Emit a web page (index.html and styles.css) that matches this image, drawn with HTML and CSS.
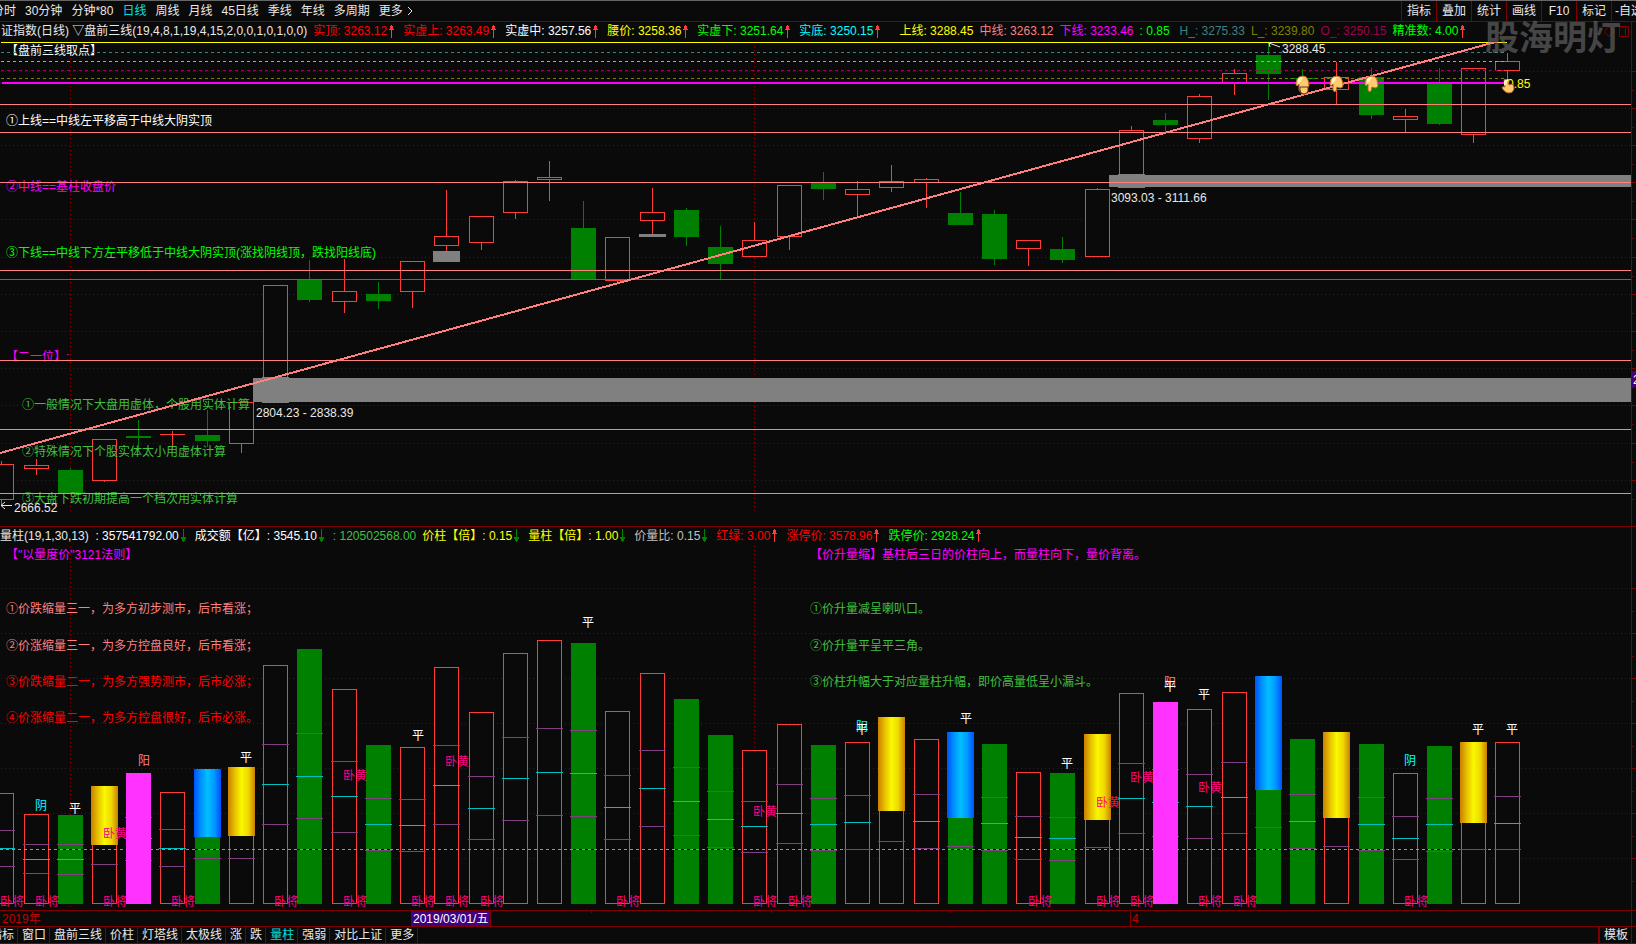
FILE: index.html
```
<!DOCTYPE html>
<html lang="zh-CN">
<head>
<meta charset="utf-8">
<title>上证指数 日线</title>
<link rel="stylesheet" href="styles.css">
</head>
<body>
<svg width="0" height="0" class="defs" aria-hidden="true">
  <symbol id="up" viewBox="0 0 5 13"><path d="M2 4h1v9h-1zM2 0h1v1h1v3h1v1h-5v-1h1v-3h1z" fill="#ff3c38"/></symbol>
  <symbol id="down" viewBox="0 0 5 13"><path d="M2 0h1v9h-1zM0 8h5v2h-1v2h-1v1h-1v-1h-1v-2h-1z" fill="#008000"/></symbol>
</svg>
<div class="app">
  <header class="toolbar">
    <nav class="periods">
      <button>分时</button><button>30分钟</button><button>分钟*80</button><button class="on">日线</button><button>周线</button><button>月线</button><button>45日线</button><button>季线</button><button>年线</button><button>多周期</button><button>更多<svg class="chevron" viewBox="0 0 6 10"><path d="M1 1L5 5L1 9" fill="none" stroke="#e8e8e8"/></svg></button>
    </nav>
    <div class="tools">
      <button>指标</button><button>叠加</button><button>统计</button><button>画线</button><button>F10</button><button>标记</button><button class="last">-自选</button>
    </div>
  </header>

  <main class="panels">
    <section class="panel price">
      <div class="legend">
        <span class="soft">证指数(日线) ▽盘前三线(19,4,8,1,19,4,15,2,0,0,1,0,1,0,0)</span>
        <span class="red">实顶: 3263.12<svg class="arr"><use href="#up"/></svg></span>
        <span class="red">实虚上: 3263.49<svg class="arr"><use href="#up"/></svg></span>
        <span class="white">实虚中: 3257.56<svg class="arr"><use href="#up"/></svg></span>
        <span class="yellow">腰价: 3258.36<svg class="arr"><use href="#up"/></svg></span>
        <span class="lime">实虚下: 3251.64<svg class="arr"><use href="#up"/></svg></span>
        <span class="cyan wide">实底: 3250.15<svg class="arr"><use href="#up"/></svg></span>
        <span class="yellow">上线: 3288.45</span>
        <span class="salmon">中线: 3263.12</span>
        <span class="magenta">下线: 3233.46</span>
        <span class="lime mid">: 0.85</span>
        <span class="teal">H_: 3275.33</span>
        <span class="olive">L_: 3239.80</span>
        <span class="wine">O_: 3250.15</span>
        <span class="lime">精准数: 4.00<svg class="arr"><use href="#up"/></svg></span>
        <svg class="corner" viewBox="0 0 26 11"><path d="M0 5.500L5 .5L10 5.500L5 10.500zM15.500 .5h9v10h-9zM21.500 .5v10" fill="none" stroke="#800000"/></svg>
      </div>
      <svg id="price" class="chart" viewBox="0 42 1636 484"></svg>
      <div class="watermark">股海明灯</div>
    </section>

    <section class="panel volume">
      <div class="legend">
        <span class="soft">量柱(19,1,30,13) <b class="white"> : 357541792.00</b><svg class="arr"><use href="#down"/></svg></span>
        <span class="white">成交额【亿】: 3545.10<svg class="arr"><use href="#down"/></svg></span>
        <span class="green">: 120502568.00</span>
        <span class="yellow">价柱【倍】: 0.15<svg class="arr"><use href="#down"/></svg></span>
        <span class="yellow">量柱【倍】: 1.00<svg class="arr"><use href="#down"/></svg></span>
        <span class="grey">价量比: 0.15<svg class="arr"><use href="#down"/></svg></span>
        <span class="red">红绿: 3.00<svg class="arr"><use href="#up"/></svg></span>
        <span class="red">涨停价: 3578.96<svg class="arr"><use href="#up"/></svg></span>
        <span class="lime">跌停价: 2928.24<svg class="arr"><use href="#up"/></svg></span>
      </div>
      <svg id="volume" class="chart" viewBox="0 546 1636 364"></svg>
    </section>
    <svg id="dates" class="chart dates" viewBox="0 911 1636 15"></svg>
  </main>

  <footer class="tabs">
    <button>指标</button><button>窗口</button><button>盘前三线</button><button>价柱</button><button>灯塔线</button><button>太极线</button><button>涨</button><button>跌</button><button class="on">量柱</button><button>强弱</button><button>对比上证</button><button>更多</button>
    <button class="template">模板</button>
  </footer>
</div>
<script src="chart.js"></script>
</body>
</html>
```
FILE: styles.css
```
* { box-sizing: border-box; }
body {
  margin: 0;
  background: #0a0a0a;
  color: #e8e8e8;
  font: 12px/16px "Liberation Sans", "Noto Sans CJK SC", sans-serif;
  overflow: hidden;
}
.defs { position: absolute; }
.app { border-top: 1px solid #666; }
button {
  flex: none;
  margin: 0;
  padding: 0;
  border: 0;
  background: none;
  color: inherit;
  font: inherit;
  white-space: nowrap;
}
.on { color: #00e0e0; }

.toolbar {
  display: flex;
  justify-content: space-between;
  height: 21px;
  border-bottom: 1px solid #800000;
  overflow: hidden;
}
.periods { display: flex; gap: 9px; margin-left: -8px; }
.chevron { width: 6px; height: 10px; margin-left: 4px; vertical-align: -1px; }
.tools { display: flex; }
.tools button { width: 35px; border-left: 1px solid #800000; }
.tools .last { width: 25px; padding-left: 3px; text-align: left; overflow: hidden; }

.panel { position: relative; border-bottom: 1px solid #800000; }
.panels::after {
  content: "";
  position: absolute;
  top: 22px;
  right: 4px;
  bottom: 0;
  border-right: 1px solid #800000;
}
.legend {
  display: flex;
  align-items: center;
  gap: 6px;
  height: 20px;
  padding-left: 1px;
  white-space: nowrap;
  overflow: hidden;
}
.price .legend { padding-bottom: 2px; }
.volume .legend { height: 19px; padding: 0 0 2px; }
.legend span { display: flex; align-items: center; white-space: pre; }
.legend b { font-weight: normal; }
.legend .wide { margin-right: 10px; }
.legend .mid { margin-right: 4px; }
.arr { width: 5px; height: 13px; margin: 0 3px 0 2px; }
.corner { width: 26px; height: 11px; margin-left: auto; margin-right: 6px; }

.soft { color: #e8e8e8; }
.white { color: #fff; }
.red { color: #f00; }
.yellow { color: #ff0; }
.lime { color: #0f0; }
.cyan { color: #0ff; }
.salmon { color: #ff8080; }
.magenta { color: #f0f; }
.teal { color: #408080; }
.olive { color: #808000; }
.wine { color: #a00050; }
.green { color: #40c040; }
.grey { color: #c0c0c0; }

.chart { display: block; width: 100%; height: auto; font-size: 12px; }
.chart rect, .chart line { shape-rendering: crispEdges; }
.chart text { white-space: pre; }
.dates { border-bottom: 1px solid #800000; box-sizing: content-box; }
.watermark {
  position: absolute;
  top: -6px;
  right: 15px;
  color: rgba(128, 128, 128, 0.5);
  font: bold 34px/40px "Noto Sans CJK SC", sans-serif;
}

.tabs {
  display: flex;
  height: 17px;
  border-bottom: 1px solid #800000;
}
.tabs button { padding: 0 3px 0 4px; border-right: 1px solid #800000; }
.tabs button:first-child { margin-left: -14px; }
.tabs .template { margin-left: auto; margin-right: 4px; border-left: 2px solid #800000; }
```
FILE: chart.js
```
const NS = 'http://www.w3.org/2000/svg';
const BG = '#0a0a0a', RED = '#ff3c38', GREEN = '#008000', DARK = '#800000';
const SALMON = '#ff8080', GREY = '#808080';

let target;
function add(tag, attrs, text) {
  const el = document.createElementNS(NS, tag);
  for (const k in attrs) el.setAttribute(k, attrs[k]);
  if (text !== undefined) el.textContent = text;
  target.appendChild(el);
  return el;
}
const box = (x, y, w, h, fill) => add('rect', { x, y, width: w, height: h, fill });
const frame = (x, y, w, h) =>
  add('rect', { x: x + 0.5, y: y + 0.5, width: w - 1, height: Math.max(h - 1, 1), fill: BG, stroke: RED });
function rule(x1, y1, x2, y2, stroke, dash) {
  const h = y1 === y2 ? 0.5 : 0, v = x1 === x2 ? 0.5 : 0;
  return add('line', { x1: x1 + v, y1: y1 + h, x2: x2 + v, y2: y2 + h, stroke, 'stroke-dasharray': dash || 'none' });
}
const label = (x, y, fill, text, anchor) =>
  add('text', { x, y: y + 5, fill, 'text-anchor': anchor || 'start' }, text);

const X = [-11, 24, 58, 92, 126, 160, 195, 229, 263, 297, 332, 366, 400, 434, 469, 503, 537, 571, 605, 640,
  674, 708, 742, 777, 811, 845, 879, 914, 948, 982, 1016, 1050, 1085, 1119, 1153, 1187, 1222, 1256, 1290,
  1324, 1359, 1393, 1427, 1461, 1495];

/* colour, high, body top, body bottom, low */
const candles = [
  ['r', 461, 464, 500, 504], ['r', 459, 465, 469, 474], ['g', 468, 470, 493, 493], ['r', 439, 439, 481, 481],
  ['g', 420, 436, 438, 449], ['r', 431, 434, 435, 449], ['g', 410, 435, 441, 446], ['r', 402, 402, 444, 452],
  ['r', 285, 285, 400, 400], ['g', 260, 280, 300, 301], ['r', 259, 291, 302, 312], ['g', 282, 294, 301, 308],
  ['r', 261, 261, 292, 307], ['r', 190, 236, 246, 251], ['r', 216, 216, 243, 249], ['r', 180, 181, 213, 218],
  ['r', 161, 177, 180, 200], ['g', 201, 228, 279, 279], ['r', 237, 237, 281, 282], ['r', 188, 212, 221, 234],
  ['g', 208, 210, 237, 245], ['g', 226, 247, 264, 279], ['r', 222, 240, 257, 256], ['r', 185, 185, 237, 249],
  ['g', 172, 182, 189, 199], ['r', 181, 189, 195, 216], ['r', 165, 181, 188, 191], ['r', 178, 179, 183, 207],
  ['g', 192, 213, 225, 224], ['g', 210, 214, 259, 264], ['r', 240, 240, 249, 265], ['g', 237, 249, 260, 262],
  ['r', 188, 189, 257, 256], ['r', 126, 130, 180, 180], ['g', 113, 120, 125, 131], ['r', 94, 96, 139, 142],
  ['r', 69, 73, 84, 94], ['g', 43, 55, 74, 99], ['g', 69, 78, 79, 90], ['r', 62, 77, 90, 104],
  ['g', 68, 77, 115, 118], ['r', 109, 116, 120, 131], ['g', 68, 83, 124, 124], ['r', 68, 68, 135, 142],
  ['r', 53, 61, 71, 80]
];

/* kind, top, [quarter marks], cylinder bottom */
const volumes = [
  ['r', 793, [830, 848, 866]], ['r', 814, [844, 859, 873]], ['g', 815, [844, 859, 874]], ['gold', 786, [864], 845],
  ['m', 773, [817, 838, 860]], ['r', 792, [829, 848, 866]], ['blue', 769, [858], 837], ['gold', 767, [858], 836],
  ['r', 665, [744, 784, 824]], ['g', 649, [733, 776, 818]], ['r', 689, [761, 796, 832]], ['g', 745, [798, 824, 850]],
  ['r', 747, [799, 825, 851]], ['r', 667, [745, 785, 824]], ['r', 712, [776, 808, 839]], ['r', 653, [737, 778, 820]],
  ['r', 640, [728, 772, 815]], ['g', 643, [730, 773, 816]], ['r', 711, [775, 807, 839]], ['r', 673, [750, 788, 826]],
  ['g', 699, [767, 801, 835]], ['g', 735, [791, 819, 847]], ['r', 750, [801, 826, 852]], ['r', 724, [784, 813, 843]],
  ['g', 745, [798, 824, 850]], ['r', 742, [795, 822, 849]], ['gold', 717, [841], 811], ['r', 739, [794, 821, 848]],
  ['blue', 732, [846], 818], ['g', 744, [797, 823, 850]], ['r', 772, [816, 837, 859]], ['g', 773, [817, 838, 860]],
  ['gold', 734, [847], 820], ['r', 693, [763, 798, 833]], ['m', 702, [769, 802, 836]], ['r', 709, [774, 806, 838]],
  ['r', 692, [762, 797, 833]], ['blue', 676, [827], 790], ['g', 739, [794, 821, 848]], ['gold', 732, [846], 818],
  ['g', 744, [797, 824, 850]], ['r', 773, [816, 838, 859]], ['g', 746, [798, 824, 851]], ['gold', 742, [849], 823],
  ['r', 742, [796, 823, 849]]
];

function drawPrice() {
  target = document.getElementById('price');
  for (const y of [71, 108, 145, 182, 219, 257, 294, 331, 368, 405, 443, 480]) {
    rule(1, y, 1631, y, DARK, '1 3');
    rule(1632, y, 1636, y, DARK);
    rule(1632, y + 19, 1634, y + 19, DARK);
  }
  for (const x of [70, 754]) rule(x, 46, x, 511, DARK, '1 3');

  const notes = [
    [6, 50, '#fff', '【盘前三线取点】'], [6, 120, '#fff', '①上线==中线左平移高于中线大阴实顶'],
    [6, 186, '#f0f', '②中线==基柱收盘价'],
    [6, 252, '#0f0', '③下线==中线下方左平移低于中线大阴实顶(涨找阴线顶，跌找阳线底)'],
    [6, 356, '#f0f', '【二一位】:'],
    [22, 404, '#40c040', '①一般情况下大盘用虚体，个股用实体计算'],
    [22, 451, '#40c040', '②特殊情况下个股实体太小用虚体计算'],
    [22, 498, '#40c040', '③大盘下跌初期提高一个档次用实体计算']
  ];
  candles.forEach(([c, hi, top, bot, lo], i) => {
    const x = X[i], col = c === 'r' ? RED : GREEN;
    box(x + 12, hi, 1, lo - hi + 1, col);
    if (c === 'g') box(x, top, 25, bot - top, col);
    else if (bot - top < 2) box(x, top, 25, 1, col);
    else frame(x, top, 25, bot - top);
  });
  notes.forEach(n => label(...n));

  box(253, 378, 1378, 24, GREY);
  box(262, 377, 27, 26, GREY);
  box(433, 251, 27, 11, GREY);
  box(639, 234, 27, 3, GREY);
  box(1109, 175, 522, 12, GREY);
  box(1118, 174, 27, 14, GREY);

  for (const y of [104, 132, 182, 270, 360, 429, 493]) rule(0, y, 1631, y, SALMON);
  rule(0, 279, 1631, 279, '#d818d8');
  rule(1, 42, 1507, 42, '#ff0');
  rule(1, 52, 1507, 52, '#408080', '3 3');
  rule(1, 61, 1507, 61, SALMON, '3 3');
  rule(1, 70, 1507, 70, '#a00050', '3 3');
  rule(1, 78, 1507, 78, '#808000', '3 3');
  box(2, 82, 1503, 2, '#f0f');
  add('line', { x1: 0, y1: 453, x2: 1499, y2: 41, stroke: SALMON, 'stroke-width': 2 });

  label(256, 412, '#e8e8e8', '2804.23 - 2838.39');
  label(1111, 197, '#e8e8e8', '3093.03 - 3111.66');
  label(1282, 48, '#e8e8e8', '3288.45');
  label(14, 507, '#e8e8e8', '2666.52');
  label(1507, 83, '#ff0', '0.85');
  const stroke = '#e8e8e8';
  add('path', { d: 'M1 505.500H12M5 502L1 505.500L5 509', fill: 'none', stroke });
  add('path', { d: 'M1280 47L1269 43M1274 42L1269 43L1270 47', fill: 'none', stroke });

  const down = 'M-5 -5Q-3 -8 1 -8Q5 -8 6 -4L7 1Q7 4 4 4L1 3L0 7Q-2 9 -3 6V0L-5 2Q-7 1 -5 -5Z';
  const hand = (x, y, d) => {
    add('path', { d, transform: `translate(${x} ${y})`, fill: '#ffcb70', stroke: '#b86a20', 'stroke-width': 1 });
    add('path', { d: 'M-4 -5Q-2 -7 1 -7L-1 -3L-4 0Z', transform: `translate(${x} ${y})`, fill: '#fff0c8' });
  };
  hand(1302, 84, down);
  add('path', { d: 'M1300 87h8v4q-1 3 -4 3q-4 0 -4 -4z', fill: '#ffcb70', stroke: '#5a3818' });
  hand(1336, 84, down);
  hand(1371, 84, down);
  hand(1508, 86, 'M-4 -6Q-3 -8 -1 -5L1 -1L4 -2Q6 -1 6 3Q5 7 1 7Q-3 7 -6 2Q-6 0 -3 1Z');

  box(1632, 371, 4, 16, '#400080');
  label(1633, 379, '#fff', '2');
}

function gradient(id, stops) {
  const g = add('linearGradient', { id });
  const outer = target;
  target = g;
  stops.forEach((c, i) => add('stop', { offset: i / (stops.length - 1), 'stop-color': c }));
  target = outer;
}

function drawVolume() {
  target = document.getElementById('volume');
  gradient('gold', ['#c88000', '#e8c000', '#f8f800', '#f0d800', '#c88000']);
  gradient('blue', ['#0050ff', '#0090ff', '#00c0ff', '#0098ff', '#0050ff']);
  for (const y of [588, 633, 678, 723, 768, 813, 858]) {
    rule(1, y, 1631, y, DARK, '1 3');
    rule(1632, y, 1636, y, DARK);
    rule(1632, y + 23, 1634, y + 23, DARK);
  }
  for (const x of [70, 754]) rule(x, 546, x, 907, DARK, '1 3');

  const notes = [
    [6, 554, '#f0f', '【"以量度价"3121法则】'],
    [6, 608, SALMON, '①价跌缩量三一，为多方初步测市，后市看涨；'],
    [6, 645, SALMON, '②价涨缩量三一，为多方控盘良好，后市看涨；'],
    [6, 681, '#f00', '③价跌缩量二一，为多方强势测市，后市必涨；'],
    [6, 717, '#f00', '④价涨缩量二一，为多方控盘很好，后市必涨。'],
    [810, 554, '#f0f', '【价升量缩】基柱后三日的价柱向上，而量柱向下，量价背离。'],
    [810, 608, '#40c040', '①价升量减呈喇叭口。'],
    [810, 645, '#40c040', '②价升量平呈平三角。'],
    [810, 681, '#40c040', '③价柱升幅大于对应量柱升幅，即价高量低呈小漏斗。']
  ];
  notes.forEach(n => label(...n));

  volumes.forEach(([kind, top], i) => {
    if (kind === 'r' || kind === 'gold') frame(X[i], top, 25, 904 - top);
    else if (kind !== 'm') {
      box(X[i], top, 25, 904 - top, GREEN);
      box(X[i], 849, 25, 1, '#000');
    }
  });
  rule(0, 849, 1492, 849, '#50c850', '3 3');
  volumes.forEach(([kind, top, marks, end], i) => {
    const x = X[i];
    marks.forEach((y, k) => box(x - 1, y, 27, 1, k === 1 ? '#00c0c0' : '#804080'));
    if (kind === 'm') box(x, top, 25, 904 - top, '#ff32ff');
    if (end) box(x - 1, top, 27, end - top, `url(#${kind})`);
  });

  const C = '#0ff', W = '#fff', P = '#ff0080';
  const marks = [
    [41, 805, C, '阴'], [75, 808, W, '平'], [144, 760, SALMON, '阳'], [246, 757, W, '平'], [418, 735, W, '平'],
    [588, 622, W, '平'], [862, 726, C, '阴'], [862, 729, W, '平'], [966, 718, W, '平'], [1067, 763, W, '平'],
    [1170, 682, SALMON, '阳'], [1170, 686, W, '平'], [1204, 694, W, '平'], [1410, 760, C, '阴'],
    [1478, 729, W, '平'], [1512, 729, W, '平'],
    [115, 833, P, '卧黄'], [355, 775, P, '卧黄'], [457, 761, P, '卧黄'], [765, 811, P, '卧黄'],
    [1108, 802, P, '卧黄'], [1142, 777, P, '卧黄'], [1210, 787, P, '卧黄']
  ];
  marks.forEach(m => label(...m, 'middle'));
  for (const x of [12, 47, 115, 183, 286, 355, 423, 457, 492, 628, 765, 800, 1040, 1108, 1142, 1210, 1245, 1416])
    label(x, 901, P, '卧将', 'middle');
}

function drawDates() {
  target = document.getElementById('dates');
  label(2, 918, '#c00000', '2019年');
  for (const x of [591, 771, 950]) box(x, 911, 1, 2, DARK);
  add('rect', { x: 411.5, y: 910.5, width: 79, height: 16, fill: '#400080', stroke: DARK });
  label(413, 918, '#fff', '2019/03/01/五');
  box(1130, 911, 1, 15, DARK);
  label(1132, 918, '#c00000', '4');
}

drawPrice();
drawVolume();
drawDates();
```
